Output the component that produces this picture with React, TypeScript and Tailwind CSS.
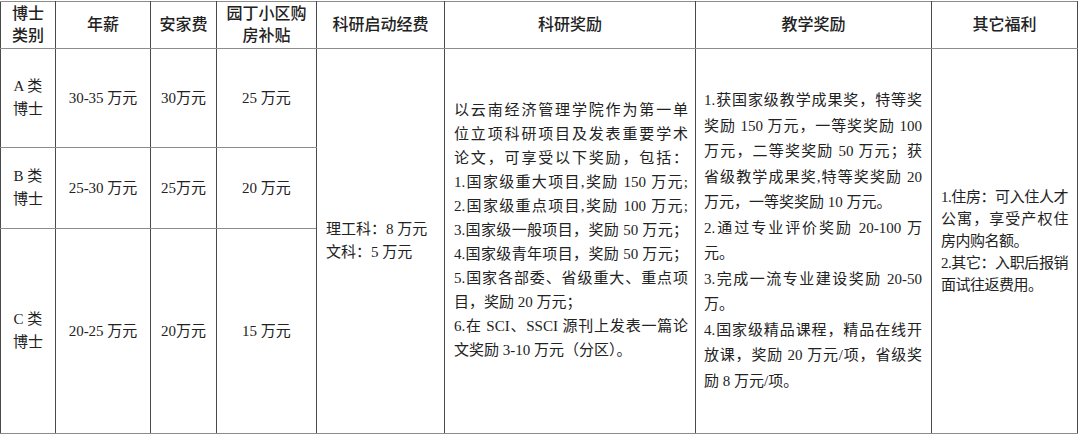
import React from 'react';

type Line = { t: string; full?: boolean };

const research: Line[] = [
  { t: '以云南经济管理学院作为第一单', full: true },
  { t: '位立项科研项目及发表重要学术', full: true },
  { t: '论文，可享受以下奖励，包括：', full: true },
  { t: '1.国家级重大项目,奖励 150 万元;', full: true },
  { t: '2.国家级重点项目,奖励 100 万元;', full: true },
  { t: '3.国家级一般项目，奖励 50 万元；', full: true },
  { t: '4.国家级青年项目，奖励 50 万元；', full: true },
  { t: '5.国家各部委、省级重大、重点项', full: true },
  { t: '目，奖励 20 万元；' },
  { t: '6.在 SCI、SSCI 源刊上发表一篇论', full: true },
  { t: '文奖励 3-10 万元（分区）。' },
];

const teaching: Line[] = [
  { t: '1.获国家级教学成果奖，特等奖', full: true },
  { t: '奖励 150 万元，一等奖奖励 100', full: true },
  { t: '万元，二等奖奖励 50 万元；获', full: true },
  { t: '省级教学成果奖,特等奖奖励 20', full: true },
  { t: '万元，一等奖奖励 10 万元。' },
  { t: '2.通过专业评价奖励 20-100 万', full: true },
  { t: '元。' },
  { t: '3.完成一流专业建设奖励 20-50', full: true },
  { t: '万。' },
  { t: '4.国家级精品课程，精品在线开', full: true },
  { t: '放课，奖励 20 万元/项，省级奖', full: true },
  { t: '励 8 万元/项。' },
];

const welfare: Line[] = [
  { t: '1.住房：可入住人才', full: true },
  { t: '公寓，享受产权住', full: true },
  { t: '房内购名额。' },
  { t: '2.其它：入职后报销', full: true },
  { t: '面试往返费用。' },
];

const rows = [
  { kind: 'A 类', salary: '30-35 万元', settle: '30万元', house: '25 万元', h: 'h-[99px]' },
  { kind: 'B 类', salary: '25-30 万元', settle: '25万元', house: '20 万元', h: 'h-[81px]' },
  { kind: 'C 类', salary: '20-25 万元', settle: '20万元', house: '15 万元', h: 'h-[205px]' },
];

function Lines({ lines, lh }: { lines: Line[]; lh: string }) {
  return (
    <div className={lh}>
      {lines.map((l, i) => (
        <div key={i} className={l.full ? 'text-justify [text-align-last:justify]' : 'text-left'}>
          {l.t}
        </div>
      ))}
    </div>
  );
}

const cell = 'border border-x-[#4a4a4a] border-y-[#8c8c8c] align-middle';
const head = `${cell} text-center text-[16px] leading-[22px] font-medium`;

export default function App() {
  return (
    <div className="w-[1080px] h-[435px] bg-white pt-px font-['Liberation_Serif','Noto_Sans_CJK_SC',serif] text-[#222] text-[15px]">
      <table className="table-fixed border-collapse w-[1077px]">
        <colgroup>
          <col className="w-[55px]" />
          <col className="w-[95px]" />
          <col className="w-[66px]" />
          <col className="w-[100px]" />
          <col className="w-[128px]" />
          <col className="w-[251px]" />
          <col className="w-[236px]" />
          <col className="w-[146px]" />
        </colgroup>
        <tbody>
          <tr className="h-[47px]">
            <td className={head}>博士<br />类别</td>
            <td className={head}>年薪</td>
            <td className={head}>安家费</td>
            <td className={head}>园丁小区购<br />房补贴</td>
            <td className={head}>科研启动经费</td>
            <td className={head}>科研奖励</td>
            <td className={head}>教学奖励</td>
            <td className={head}>其它福利</td>
          </tr>
          {rows.map((r, i) => (
            <tr key={r.kind} className={r.h}>
              <td className={`${cell} text-center leading-[23px]`}>
                {r.kind}
                <br />
                博士
              </td>
              <td className={`${cell} text-center`}>{r.salary}</td>
              <td className={`${cell} text-center`}>{r.settle}</td>
              <td className={`${cell} text-center`}>{r.house}</td>
              {i === 0 && (
                <>
                  <td rowSpan={3} className={`${cell} px-[9px] leading-[23px]`}>
                    <div>理工科：8 万元</div>
                    <div>文科：5 万元</div>
                  </td>
                  <td rowSpan={3} className={`${cell} pl-[9px] pr-[7px] pb-[22px]`}>
                    <Lines lines={research} lh="leading-[24px]" />
                  </td>
                  <td rowSpan={3} className={`${cell} pl-[8px] pr-[9px]`}>
                    <Lines lines={teaching} lh="leading-[25.5px]" />
                  </td>
                  <td rowSpan={3} className={`${cell} pl-[9px] pr-[9px] tracking-[-0.5px]`}>
                    <Lines lines={welfare} lh="leading-[22px]" />
                  </td>
                </>
              )}
            </tr>
          ))}
        </tbody>
      </table>
    </div>
  );
}
